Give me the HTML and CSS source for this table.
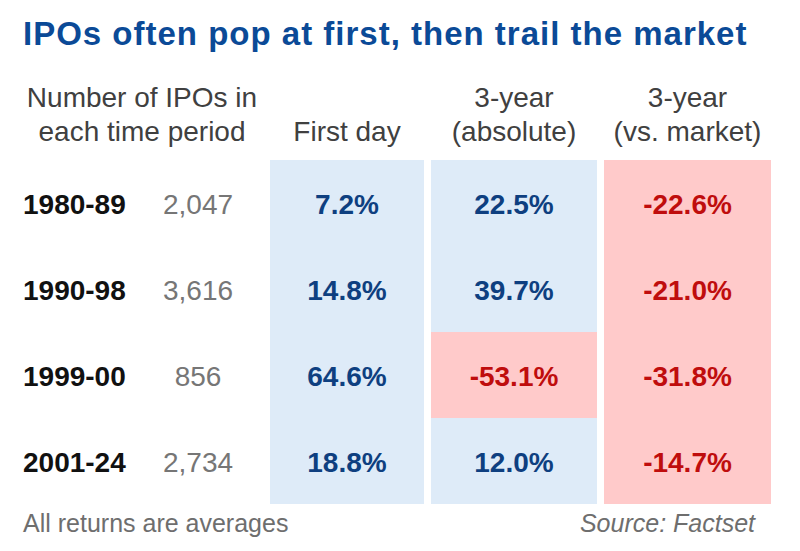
FILE: index.html
```html
<!DOCTYPE html>
<html lang="en">
<head>
<meta charset="utf-8">
<title>IPOs often pop at first, then trail the market</title>
<link rel="stylesheet" href="styles.css">
</head>
<body>
<main class="page">
  <h1 class="title">IPOs often pop at first, then trail the market</h1>
  <div class="table">
    <div class="head head-count">Number of IPOs in<br>each time period</div>
    <div class="head">First day</div>
    <div class="head">3-year<br>(absolute)</div>
    <div class="head">3-year<br>(vs. market)</div>

    <div class="cell label">1980-89</div>
    <div class="cell count">2,047</div>
    <div class="cell val pos">7.2%</div>
    <div class="cell val pos">22.5%</div>
    <div class="cell val neg">-22.6%</div>

    <div class="cell label">1990-98</div>
    <div class="cell count">3,616</div>
    <div class="cell val pos">14.8%</div>
    <div class="cell val pos">39.7%</div>
    <div class="cell val neg">-21.0%</div>

    <div class="cell label">1999-00</div>
    <div class="cell count">856</div>
    <div class="cell val pos">64.6%</div>
    <div class="cell val neg">-53.1%</div>
    <div class="cell val neg">-31.8%</div>

    <div class="cell label">2001-24</div>
    <div class="cell count">2,734</div>
    <div class="cell val pos">18.8%</div>
    <div class="cell val pos">12.0%</div>
    <div class="cell val neg">-14.7%</div>
  </div>
  <footer class="foot">
    <span class="note">All returns are averages</span>
    <span class="source">Source: Factset</span>
  </footer>
</main>
</body>
</html>
```
FILE: styles.css
```css
html, body {
  margin: 0;
  padding: 0;
  background: #ffffff;
}

.page {
  width: 800px;
  height: 551px;
  box-sizing: border-box;
  padding: 14px 0 0 23px;
  font-family: "Liberation Sans", Arial, sans-serif;
  overflow: hidden;
}

.title {
  margin: 0;
  font-size: 33px;
  line-height: 40px;
  font-weight: bold;
  letter-spacing: 1px;
  color: #0b4a97;
  white-space: nowrap;
}

.table {
  display: grid;
  grid-template-columns: 117px 116px 154px 166px 167px;
  grid-template-rows: auto repeat(4, 86px);
  column-gap: 7px;
  margin-top: 27px;
}

.head {
  font-size: 28px;
  line-height: 34px;
  color: #404040;
  text-align: center;
  align-self: end;
  padding-bottom: 11px;
  white-space: nowrap;
}

.head-count {
  grid-column: 1 / 3;
  padding-right: 2px;
}

.cell {
  display: flex;
  align-items: center;
  font-size: 28px;
  line-height: 32px;
  padding-top: 3px;
  box-sizing: border-box;
}

.label {
  font-weight: bold;
  color: #111111;
}

.count {
  justify-content: center;
  padding-right: 14px;
  color: #767676;
}

.val {
  justify-content: center;
  font-weight: bold;
}

.pos {
  background: #deebf8;
  color: #0e3f80;
}

.neg {
  background: #ffcaca;
  color: #bf0d0d;
}

.foot {
  display: flex;
  justify-content: space-between;
  width: 732px;
  margin-top: 4px;
  font-size: 25px;
  line-height: 30px;
  color: #6e6e6e;
}

.source {
  font-style: italic;
}
```
